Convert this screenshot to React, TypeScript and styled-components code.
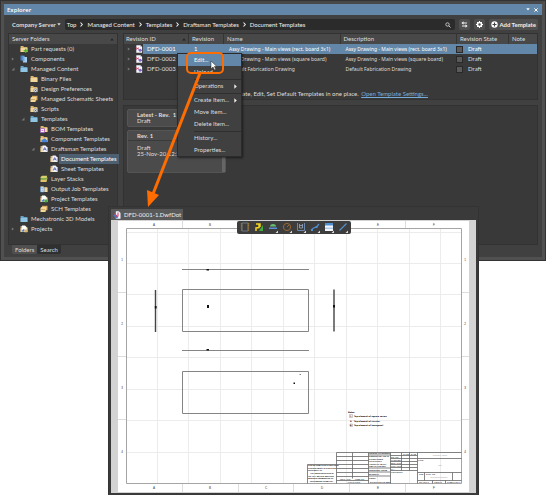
import React from "react";
import styled, { createGlobalStyle } from "styled-components";

const Global = createGlobalStyle`
  *, *::before, *::after { box-sizing: border-box; }
  body { margin: 0; background: #fff; }
  button, input, table { font: inherit; color: inherit; }
  button { border: 0; padding: 0; background: none; text-align: left; white-space: nowrap; }
  ul { list-style: none; margin: 0; padding: 0; }
  svg { display: block; flex: none; }
`;

const Stage = styled.main`
  position: relative;
  min-height: 495px;
  font: 6px/10px Lato, "Open Sans", sans-serif;
  color: #dedede;
`;
const Explorer = styled.section`
  display: flex;
  flex-direction: column;
  background: #404040;
  border: 4px solid #505050;
  border-top-color: #484848;
  outline: 1px solid #333;
  outline-offset: -1px;
  padding-bottom: 3px;
`;
const TitleBar = styled.header`
  display: flex;
  align-items: center;
  justify-content: space-between;
  height: 11px;
  padding: 0 4px 0 3px;
  background: #6287a8;
  color: #fff;
  font-size: 6px;
  font-weight: 600;
  font-family: "Open Sans", sans-serif;
`;
const TitleButtons = styled.div`
  display: flex;
  gap: 4px;
`;
const NavRow = styled.nav`
  display: flex;
  align-items: center;
  gap: 4px;
  padding: 4px 4px 3px 8px;
`;
const ServerButton = styled.button`
  display: flex;
  align-items: center;
  gap: 1px;
  font-weight: 700;
`;
const Breadcrumb = styled.div`
  flex: 1;
  display: flex;
  align-items: center;
  gap: 4px;
  height: 11px;
  padding: 0 4px 0 2px;
  background: #2b2b2b;
  border-radius: 2px;
  color: #f0f0f0;
`;
const Spacer = styled.span`
  flex: 1;
`;
const ToolButton = styled.button`
  display: flex;
  align-items: center;
  justify-content: center;
  gap: 1px;
  min-width: 11px;
  height: 11px;
  padding: 0 2px;
  background: #505050;
  border-radius: 2px;
  color: #eee;
  font-weight: 700;
`;
const Body = styled.div`
  display: grid;
  grid-template-columns: 110px minmax(0, 1fr);
  gap: 5px;
  padding: 0 4px;
`;
const Panel = styled.section`
  background: #393939;
  border: 1px solid #323232;
`;
const FolderPanel = styled(Panel)`
  min-height: 212px;
`;
const PanelHead = styled.h2`
  display: flex;
  align-items: center;
  justify-content: space-between;
  height: 10px;
  margin: 0;
  padding: 0 3px;
  background: #484848;
  font-size: 6px;
  font-weight: 400;
`;
const TreeItem = styled.li<{ $depth: number }>`
  display: flex;
  align-items: center;
  height: 10px;
  padding-left: ${(p) => 2 + p.$depth * 10}px;
`;
const Twisty = styled.span`
  flex: none;
  width: 9px;
`;
const TreeLabel = styled.button<{ $on?: boolean }>`
  height: 10px;
  margin-left: 1px;
  padding: 0 2px;
  flex: ${(p) => (p.$on ? "1" : "none")};
  background: ${(p) => (p.$on ? "#4d6072" : "transparent")};
  color: ${(p) => (p.$on ? "#fff" : "inherit")};
`;
const Right = styled.div`
  display: grid;
  grid-template-rows: 67px minmax(0, 1fr);
  gap: 5px;
`;
const ListPanel = styled(Panel)`
  display: flex;
  flex-direction: column;
  justify-content: space-between;
`;
const Table = styled.table`
  width: 100%;
  table-layout: fixed;
  border-collapse: collapse;
`;
const Col = styled.col<{ $w?: number }>`
  width: ${(p) => (p.$w ? `${p.$w}px` : "auto")};
`;
const Th = styled.th`
  height: 10px;
  padding: 0 2px;
  background: #484848;
  font-weight: 400;
  text-align: left;
  white-space: nowrap;
  & + & { box-shadow: inset 1px 0 #353535; padding-left: 4px; }
`;
const HeadCell = styled.span`
  display: flex;
  align-items: center;
  justify-content: space-between;
`;
const Row = styled.tr<{ $on?: boolean }>`
  color: ${(p) => (p.$on ? "#fff" : "inherit")};
  td { background: ${(p) => (p.$on ? "#6287a8" : "transparent")}; }
  td:first-child {
    background: ${(p) => (p.$on ? "linear-gradient(90deg, transparent 19px, #6287a8 19px)" : "transparent")};
  }
`;
const Td = styled.td`
  height: 10px;
  padding: 0 0 0 6px;
  white-space: nowrap;
`;
const TextTd = styled(Td)`
  font-family: "Noto Sans", sans-serif;
  font-size: 5px;
`;
const IdCell = styled.div`
  display: flex;
  align-items: center;
  gap: 4px;
  margin-left: -3px;
`;
const StateCell = styled.label`
  display: flex;
  align-items: center;
  gap: 5px;
  margin-left: -6px;
`;
const Check = styled.input`
  appearance: none;
  width: 7px;
  height: 7px;
  margin: 0;
  border: 1px solid #292929;
  background: #5a5a5a;
`;
const Hint = styled.p`
  margin: 0;
  text-align: center;
`;
const Link = styled.a`
  margin-left: 1px;
  color: #78abd7;
`;
const PreviewPanel = styled(Panel)`
  display: flex;
  flex-direction: column;
  gap: 3px;
  padding: 3px;
`;
const Card = styled.article`
  width: 99px;
  background: #4b4b4b;
  border: 1px solid #555;
  border-radius: 2px;
  line-height: 6px;
`;
const CardTop = styled.div`
  padding: 2px 9px;
`;
const CardHead = styled.h3`
  margin: 0;
  padding: 1px 9px;
  border-bottom: 1px solid #3a3a3a;
  font-size: 6px;
  line-height: 7px;
  font-weight: 700;
`;
const CardBody = styled.div`
  height: 31px;
  padding: 4px 9px;
  border-right: 3px solid #666;
`;
const Tabs = styled.div`
  display: flex;
  padding: 0 8px;
`;
const Tab = styled.button<{ $on?: boolean }>`
  height: 9px;
  padding: 0 3px;
  line-height: 9px;
  background: ${(p) => (p.$on ? "#505050" : "#303030")};
  border-radius: 0 0 2px 2px;
`;
const Menu = styled.div`
  position: absolute;
  left: 177px;
  top: 53px;
  width: 65px;
  background: #404040;
  border: 1px solid #2c2c2c;
  box-shadow: 1px 1px 2px #0008;
`;
const MenuItem = styled.button<{ $on?: boolean }>`
  display: flex;
  align-items: center;
  justify-content: space-between;
  width: 100%;
  height: 12px;
  padding: 0 4px 0 16px;
  background: ${(p) => (p.$on ? "#6287a8" : "transparent")};
  color: ${(p) => (p.$on ? "#fff" : "inherit")};
`;
const Divider = styled.hr`
  margin: 1px 0 0 16px;
  border: 0;
  border-top: 1px solid #2f2f2f;
`;
const DocWindow = styled.section`
  position: absolute;
  left: 108px;
  right: 67px;
  top: 206px;
  padding: 2px;
  background: #3a3a3a;
  border: 1px solid #333;
`;
const DocTab = styled.button`
  display: flex;
  align-items: center;
  gap: 3px;
  height: 11px;
  padding: 0 2px;
  background: #595959;
  color: #eee;
`;
const Canvas = styled.div`
  position: relative;
  padding: 1px 7px;
  background: #d3d3d3;
`;
const Sheet = styled.svg`
  width: 100%;
  height: auto;
  background: #fff;
`;
const DrawBar = styled.div`
  position: absolute;
  top: 1px;
  left: 50%;
  transform: translateX(-50%);
  display: flex;
  align-items: center;
  gap: 4px;
  padding: 1px 3px;
  background: #3d3d3d;
  border-radius: 2px;
`;
const Pointer = styled.svg`
  position: absolute;
  left: 140px;
  top: 50px;
  pointer-events: none;
`;

const Chevron = () => (
  <svg width="3" height="5" viewBox="0 0 3 5"><path d="M.5.5 2.3 2.5.5 4.5" fill="none" stroke="#eee" strokeWidth="1.1" /></svg>
);
const Down = () => (
  <svg width="4" height="3" viewBox="0 0 4 3"><path d="M.3.3h3.4L2 2.6z" fill="currentColor" /></svg>
);
const Up = () => (
  <svg width="4" height="3" viewBox="0 0 4 3"><path d="M.2 2.6h3.6L2 .3z" fill="#252525" /></svg>
);
const Play = () => (
  <svg width="3" height="5" viewBox="0 0 3 5"><path d="M.3.2v4.6L2.8 2.5z" fill="#eee" /></svg>
);
const Arrow = ({ open }: { open?: boolean }) => (
  <svg width="4" height="4" viewBox="0 0 4 4"><path d={open ? "M3.5.5v3h-3z" : "M.8.4v3.2L3 2z"} fill="#777" /></svg>
);

type Kind = "request" | "component" | "folder" | "plain" | "gear" | "sheets" | "bom" | "cloud" | "draft" | "layers" | "job" | "project" | "projects";

const TreeIcon = ({ kind }: { kind: Kind }) => {
  const blue = kind === "folder";
  return (
    <svg width="8" height="8" viewBox="0 0 8 8">
      {kind === "component" ? (
        <><path d="M.5.5h4v5h-4z" fill="#477fc1" /><path d="M3 2h4v5.5H3z" fill="#a8cdf0" /><path d="M2.5 1.2h2v5h-2z" fill="#6da4dc" /></>
      ) : kind === "layers" ? (
        <><path d="m.5 5 2-2h5l-1 4h-6z" fill="#e1c16d" /><path d="m.5 3.5 2-1.6h5L6.4 4.8H.5z" fill="#79ad45" /><path d="m.5 2 1.7-1.3h5L6.5 3h-6z" fill="#d9cf70" /></>
      ) : kind === "sheets" ? (
        <><path d="M2 .8h5.5v4.5H2z" fill="#d7aa5c" /><path d="m.5 3 1-1h5l-1 5h-5z" fill="#f3d79a" /><path d="M1 4.5h4" stroke="#b98d45" strokeWidth=".6" /></>
      ) : (
        <><path d="M.6 1h2.6l.8 1h3.4v5H.6z" fill={blue ? "#69a5c9" : "#d9b56f"} /><path d="M.6 3h6.8v4H.6z" fill={blue ? "#8fc4e2" : "#f2d59a"} /></>
      )}
      {kind === "request" && <path d="M5.700 3.700v4M3.700 5.700h4" stroke="#55b82e" strokeWidth="1.5" />}
      {kind === "gear" && <><circle cx="5.4" cy="5.4" r="1.7" fill="#f2f2f2" stroke="#84909b" strokeWidth=".9" /><circle cx="5.4" cy="5.4" r=".6" fill="#56616c" /></>}
      {kind === "bom" && <><path d="M.4 3.6h4v4h-4z" fill="#fff" stroke="#9b47b5" strokeWidth=".8" /><path d="M1.4 5.6h2" stroke="#9b47b5" strokeWidth=".7" /></>}
      {kind === "cloud" && <path d="M2.5 7.3a1.4 1.4 0 0 1 .3-2.8 2 2 0 0 1 3.6.4 1.3 1.3 0 0 1 .4 2.4z" fill="#4a82d6" />}
      {kind === "draft" && <><path d="M2.5.5h3l1.7 1.7v4.5H2.5z" fill="#eef3ff" /><path d="m3.3 5.5 1.4-3 1.6 3M3.5 4.3h2.6" stroke="#5a62bd" strokeWidth=".8" fill="none" /></>}
      {kind === "job" && <><path d="M.6 2h3.5v5H.6z" fill="#fff" stroke="#477fc1" strokeWidth=".7" /><path d="M1.4 3.7h2M1.4 5.2h2" stroke="#477fc1" strokeWidth=".7" /></>}
      {(kind === "project" || kind === "projects") && <><path d="M2 .5h3l1.5 1.5v3.6H2z" fill="#fff" /><path d="m1.5 6 2-2 1.4 1-1.7 2z" fill="#4a82d6" /><path d="M4.5 4.5h2.8v2.8H4.5z" fill={kind === "project" ? "#4aa548" : "#d9b56f"} /></>}
    </svg>
  );
};

const DocIcon = () => (
  <svg width="8" height="8" viewBox="0 0 8 8">
    <path d="M1.3.3h4l1.8 1.8v5.6H1.3z" fill="#f5f5ff" />
    <path d="M5.3.3v1.8h1.8" fill="#b7bfda" />
    <path d="m.8 2.600 3 1.600M.8 4.600l3-1.800" stroke="#d94361" strokeWidth=".9" />
    <path d="m3 4.800 2.500-1 2 1.700-2.600 1.500z" fill="#7b69c3" />
  </svg>
);

const DocTabIcon = () => (
  <svg width="8" height="8" viewBox="0 0 8 8">
    <path d="M2.8.3h3l1.700 1.700v5.700H2.800z" fill="#f2f5ff" />
    <path d="m.3 4.500 2-1.800 3 3.300-1.600 1.500z" fill="#4774c8" />
    <path d="m1.500 2.600 3 3.300M5 1.500v4" stroke="#d94361" strokeWidth="1.100" />
  </svg>
);

const tree: { d: number; k: Kind; t: string; open?: boolean; closed?: boolean; on?: boolean }[] = [
  { d: 0, k: "request", t: "Part requests (0)" },
  { d: 0, k: "component", t: "Components", closed: true },
  { d: 0, k: "folder", t: "Managed Content", open: true },
  { d: 1, k: "plain", t: "Binary Files" },
  { d: 1, k: "gear", t: "Design Preferences" },
  { d: 1, k: "sheets", t: "Managed Schematic Sheets" },
  { d: 1, k: "gear", t: "Scripts" },
  { d: 1, k: "folder", t: "Templates", open: true },
  { d: 2, k: "bom", t: "BOM Templates" },
  { d: 2, k: "cloud", t: "Component Templates" },
  { d: 2, k: "draft", t: "Draftsman Templates", open: true },
  { d: 3, k: "draft", t: "Document Templates", on: true },
  { d: 3, k: "draft", t: "Sheet Templates" },
  { d: 2, k: "layers", t: "Layer Stacks" },
  { d: 2, k: "job", t: "Output Job Templates" },
  { d: 2, k: "project", t: "Project Templates" },
  { d: 2, k: "sheets", t: "SCH Templates" },
  { d: 0, k: "folder", t: "Mechatronic 3D Models" },
  { d: 0, k: "projects", t: "Projects", closed: true },
];

const rows = [
  { id: "DFD-0001", rev: "1", name: "Assy Drawing - Main views (rect. board 3x1)" },
  { id: "DFD-0002", rev: "1", name: "Assy Drawing - Main views (square board)" },
  { id: "DFD-0003", rev: "1", name: "Default Fabrication Drawing" },
];

const crumbs = ["Top", "Managed Content", "Templates", "Draftsman Templates", "Document Templates"];

const toolIcons = [
  <><path d="M2 1h6v8H2z" fill="none" stroke="#6d7680" /><path d="M1.5 1v8M8.500 1v8" stroke="#a67331" strokeWidth="1.3" strokeDasharray="1.2 .6" /></>,
  <><path d="M5 9 9 3v6z" fill="#3fae3f" /><path d="M2 9V6l3-.5V2.500M2 2h4v3" stroke="#f2d21f" strokeWidth="1.5" fill="none" /></>,
  <><path d="M2 4.500a3 2.500 0 0 1 6 0z" fill="#69bd73" /><path d="M1 5.500h8v1.500H1z" fill="#5d91d6" /></>,
  <><circle cx="5" cy="5" r="3.600" fill="none" stroke="#9a6832" /><path d="m5 5 2-2" stroke="#9a6832" /></>,
  <><path d="M1.500 1v7.500h7V1" fill="none" stroke="#6b87ac" /><path d="M3.500 2v4h3V2M3 3.500h4" stroke="#8796a8" fill="none" /></>,
  <><path d="M1 8.200 3.500 6l3-1L9 2" fill="none" stroke="#4f8fd0" strokeWidth="1.200" /><path d="M1 7h2v2H1zM5.500 4h2v2h-2z" fill="#4f8fd0" /></>,
  <><path d="M1 1h8v8H1z" fill="#f2f6fb" /><path d="M1 1h8v2.500H1z" fill="#4f8fd0" /><path d="M1 6.200h8" stroke="#8fb6df" /></>,
  <path d="M1.500 8.500 8.500 1.500" stroke="#4f8fd0" strokeWidth="1.300" />,
];

const gridX = [157.5, 188.5, 220.5, 251.5, 283.5, 314.5, 346.5, 377.5, 409.5, 440.5];
const gridY = [232.5, 263.5, 294.5, 326.5, 357.5, 389.5, 420.5, 452.5];

const Drawing = () => (
  <Sheet viewBox="118 221 351 271" fontFamily="Liberation Sans, sans-serif" fontSize="2" fill="#111">
    <g stroke="#ececec" fill="none">
      {gridX.map((x) => <path key={x} d={`M${x} 229V483`} />)}
      {gridY.map((y) => <path key={y} d={`M127 ${y}H462`} />)}
    </g>
    <g stroke="#ddd" fill="none">
      {[182.5, 238.5, 293.5, 349.5, 405.5].map((x) => <path key={x} d={`M${x} 221v7M${x} 484v8`} />)}
      {[292.5, 356.5, 419.5].map((y) => <path key={y} d={`M118 ${y}h8M462 ${y}h7`} />)}
    </g>
    <path d="M126.500 228.500h335v255h-335z" fill="none" stroke="#a5a5a5" />
    <g fontSize="3" textAnchor="middle" fill="#333">
      {["A", "B", "C", "D", "E", "F"].map((t, i) => (
        <React.Fragment key={t}>
          <text x={154 + i * 56} y="226">{t}</text>
          <text x={154 + i * 56} y="489">{t}</text>
        </React.Fragment>
      ))}
      {["1", "2", "3", "4"].map((t, i) => (
        <React.Fragment key={t}>
          <text x="122" y={261 + i * 64}>{t}</text>
          <text x="465" y={261 + i * 64}>{t}</text>
        </React.Fragment>
      ))}
    </g>
    <g fill="none" stroke="#858585">
      <path d="M182 269.500h127M182 350.500h127" />
      <path d="M182.500 289.500h126v42h-126zM182.500 371.500h126v42h-126z" />
    </g>
    <path d="M155.500 290v42M334 289.500v42" stroke="#444" strokeWidth="1.400" />
    <path d="M206.500 269h2.500v1.500h-2.500zM206.500 349h2.500v1.500h-2.500zM207 305h2v3h-2zM154.800 306h1.800v2.500h-1.800zM333 305h2v2.500h-2zM293.500 382.500h1.500v1.500h-1.500zM299.500 374h1.500v.6h-1.500z" />
    <path d="M349.500 414.500h3v3h-3zM350 424h2.500v2.500H350z" fill="none" stroke="#999" strokeWidth=".5" />
    <g fontWeight="700" fontFamily="DejaVu Sans, sans-serif" fill="#000">
      <text x="348" y="413">Notes</text>
      <text x="350" y="417">1</text><text x="354" y="417">Top element of square series</text>
      <text x="350" y="422">A</text><text x="354" y="422">Top element of circular</text>
      <text x="350" y="426">B</text><text x="354" y="426">Top element of hexagonal</text>
    </g>
    <g fontWeight="700" fill="#000">
      <text x="308" y="466">THE INFORMATION CONTAINED</text>
      <text x="308" y="469">THIS DRAWING IS THE SOLE</text>
      <text x="308" y="471">PROPERTY OF</text>
      <text x="310" y="474">ANY REPRODUCTION IN</text>
      <text x="308" y="477">OR AS A WHOLE WITHOUT</text>
      <text x="308" y="479">WRITTEN PERMISSION OF</text>
      <text x="310" y="482">PROHIBITED COMPANY</text>
    </g>
    <g fill="none" stroke="#666" strokeWidth=".8">
      <path d="M307.500 464.500v19M307.500 464.500h29M336.500 452.500h125M336.500 452.500v31M352.500 452.500v26M368.500 452.500v31M390.500 452.500v31M417.500 452.500v31" />
      <path d="M336.500 456.500h32M336.500 460.500h32M336.500 464.500h32M336.500 468.500h32M336.500 472.500h32M336.500 476.500h32M336.500 480.500h32" />
      <path d="M368.500 455h22M368.500 468h22M368.500 472h22M368.500 476h22M390.500 455.500h27M390.500 458.500h27M390.500 461.500h27M390.500 464.500h27M390.500 467.500h27M390.500 470.500h27M401.500 452.500v18M409.500 452.500v18" />
      <path d="M417.500 458.500h44M417.500 472.500h44M417.500 480.500h44M424.500 472.500v8M452.500 472.500v8M432.500 480.500v3M445.500 480.500v3" />
    </g>
    <text x="340" y="480">NEXT ASSY</text><text x="355" y="480">USED ON</text><text x="347" y="483">APPLICATION</text>
    <g fontWeight="700">
      <text x="369" y="454">UNLESS OTHERWISE</text><text x="369" y="457">DIMENSIONS ARE IN</text>
      <text x="369" y="460">TOLERANCES:</text><text x="369" y="462">FRACTIONAL</text>
      <text x="369" y="465">ANGULAR: MACH</text><text x="369" y="467">TWO PLACE DEC.</text>
      <text x="369" y="471">INTERPRET GEOM.</text><text x="369" y="475">MATERIAL</text>
      <text x="369" y="479">FINISH</text><text x="370" y="483">DO NOT SCALE DWG</text>
    </g>
    <text x="403" y="455">NAME</text><text x="411" y="455">DATE</text>
    <text x="391" y="458">DRAWN</text><text x="391" y="461">CHECKED</text><text x="391" y="464">ENG APPR</text>
    <text x="391" y="467">MFG APPR</text><text x="391" y="470">Q.A.</text><text x="391" y="473">COMMENTS</text>
    <g fill="#999" textAnchor="middle" fontSize="2">
      <text x="440" y="456">Company Name</text><text x="440" y="466">Title</text><text x="439" y="478">Document Number</text>
    </g>
    <text x="418" y="461">TITLE</text><text x="419" y="475">SIZE</text><text x="426" y="475">DWG. NO.</text>
    <text x="419" y="483">SCALE 1:1</text><text x="434" y="483">WEIGHT</text><text x="447" y="483">SHEET 1 OF 1</text>
  </Sheet>
);

export default function App() {
  return (
    <Stage>
      <Global />
      <Explorer>
        <TitleBar>
          Explorer
          <TitleButtons>
            <button aria-label="Window options"><Down /></button>
            <button aria-label="Close">
              <svg width="4" height="4" viewBox="0 0 4 4"><path d="m.4.4 3.200 3.200m0-3.200L.4 3.600" stroke="#fff" /></svg>
            </button>
          </TitleButtons>
        </TitleBar>
        <NavRow>
          <ServerButton>Company Server <Down /></ServerButton>
          <Breadcrumb>
            {crumbs.map((c, i) => (
              <React.Fragment key={c}>
                {i > 0 && <Chevron />}
                <button>{c}</button>
              </React.Fragment>
            ))}
            <Spacer />
            <button aria-label="Search">
              <svg width="6" height="6" viewBox="0 0 6 6"><circle cx="2.500" cy="2.500" r="1.700" fill="none" stroke="#ccc" strokeWidth=".9" /><path d="m3.800 3.800 1.700 1.700" stroke="#ccc" /></svg>
            </button>
          </Breadcrumb>
          <ToolButton aria-label="Switch view">
            <svg width="7" height="7" viewBox="0 0 7 7"><path d="M1.500 2H6M1 5h4.500" stroke="#eee" strokeWidth="1.200" /><path d="M2.500.3v3.400L.4 2zM4.500 3.300v3.400L6.600 5z" fill="#eee" /></svg>
          </ToolButton>
          <ToolButton aria-label="Settings">
            <svg width="7" height="7" viewBox="0 0 7 7"><circle cx="3.500" cy="3.500" r="2" fill="none" stroke="#fff" strokeWidth="1.500" /><path d="M3.500 0v1.500M3.500 5.500V7M0 3.500h1.500M5.500 3.500H7M1 1l1 1M5 5l1 1M6 1 5 2M2 5 1 6" stroke="#fff" /></svg>
          </ToolButton>
          <ToolButton>
            <svg width="7" height="7" viewBox="0 0 7 7"><circle cx="3.500" cy="3.500" r="3.200" fill="#fff" /><path d="M3.500 1.500v4M1.500 3.500h4" stroke="#444" strokeWidth="1.100" /></svg>
            Add Template
          </ToolButton>
        </NavRow>
        <Body>
          <FolderPanel>
            <PanelHead>Server Folders <Up /></PanelHead>
            <ul>
              {tree.map((n) => (
                <TreeItem key={n.t} $depth={n.d}>
                  <Twisty>{(n.open || n.closed) && <Arrow open={n.open} />}</Twisty>
                  <TreeIcon kind={n.k} />
                  <TreeLabel $on={n.on}>{n.t}</TreeLabel>
                </TreeItem>
              ))}
            </ul>
          </FolderPanel>
          <Right>
            <ListPanel>
              <Table>
                <colgroup>
                  <Col $w={64} /><Col $w={35} /><Col /><Col /><Col $w={52} /><Col $w={29} />
                </colgroup>
                <thead>
                  <tr>
                    <Th><HeadCell>Revision ID <Up /></HeadCell></Th>
                    <Th>Revision</Th><Th>Name</Th><Th>Description</Th><Th>Revision State</Th><Th>Note</Th>
                  </tr>
                </thead>
                <tbody>
                  {rows.map((r, i) => (
                    <Row key={r.id} $on={i === 0}>
                      <Td><IdCell><Arrow /><DocIcon />{r.id}</IdCell></Td>
                      <Td>{r.rev}</Td><TextTd>{r.name}</TextTd><TextTd>{r.name}</TextTd>
                      <Td><StateCell><Check type="checkbox" />Draft</StateCell></Td>
                      <Td />
                    </Row>
                  ))}
                </tbody>
              </Table>
              <Hint>Create, Edit, Set Default Templates in one place. <Link href="#settings">Open Template Settings...</Link></Hint>
            </ListPanel>
            <PreviewPanel>
              <Card><CardTop><b>Latest - Rev. &nbsp;1</b><br />Draft</CardTop></Card>
              <Card><CardHead>Rev. 1</CardHead><CardBody>Draft<br />25-Nov-20 12:20</CardBody></Card>
            </PreviewPanel>
          </Right>
        </Body>
        <Tabs><Tab $on>Folders</Tab><Tab>Search</Tab></Tabs>
      </Explorer>

      <Menu role="menu">
        <MenuItem role="menuitem" $on>Edit...</MenuItem>
        <MenuItem role="menuitem">Upload...</MenuItem>
        <Divider />
        <MenuItem role="menuitem">Operations <Play /></MenuItem>
        <Divider />
        <MenuItem role="menuitem">Create Item... <Play /></MenuItem>
        <MenuItem role="menuitem">Move Item...</MenuItem>
        <MenuItem role="menuitem">Delete Item...</MenuItem>
        <Divider />
        <MenuItem role="menuitem">History...</MenuItem>
        <MenuItem role="menuitem">Properties...</MenuItem>
      </Menu>

      <DocWindow>
        <DocTab><DocTabIcon />DFD-0001-1.DwfDot</DocTab>
        <Canvas>
          <Drawing />
          <DrawBar>
            {toolIcons.map((icon, i) => (
              <button key={i} aria-label={`Drawing tool ${i + 1}`}>
                <svg width="10" height="11" viewBox="0 0 10 11">{icon}{i > 1 && <path d="M10 8.500V11H7.500z" fill="#ddd" />}</svg>
              </button>
            ))}
          </DrawBar>
        </Canvas>
      </DocWindow>

      <Pointer width="90" height="160" viewBox="140 50 90 160">
        <rect x="187" y="53" width="36" height="20" rx="4" fill="none" stroke="#ff6c00" strokeWidth="2" />
        <path d="M200 73 153 194" stroke="#ff6c00" strokeWidth="3" />
        <path d="m147 190 12 5-11 12z" fill="#ff6c00" />
        <path d="M211 61v8l2-2 1.500 3 1.300-.7-1.400-2.800h2.400z" fill="#fff" stroke="#222" strokeWidth=".5" />
      </Pointer>
    </Stage>
  );
}
